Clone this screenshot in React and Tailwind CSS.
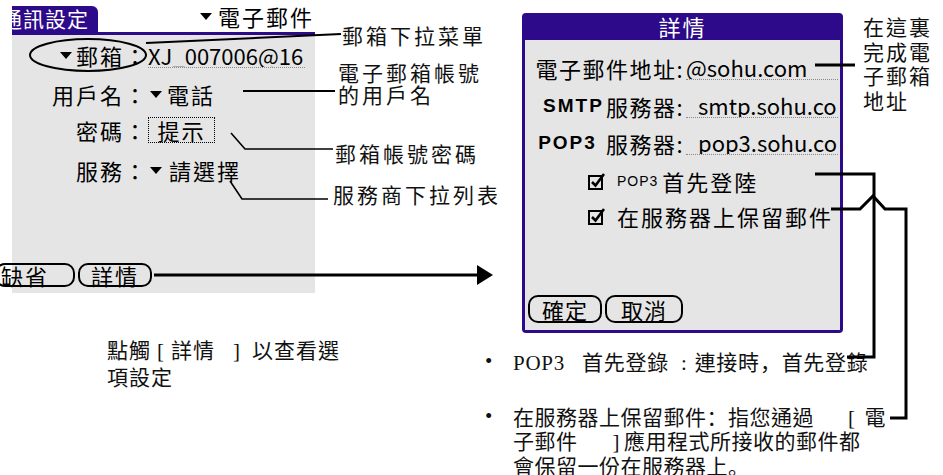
import React from 'react';

// small palm-style dropdown triangle
const Tri = ({ className = '' }) => (
  <svg width="12" height="7" viewBox="0 0 12 7" className={'shrink-0 ' + className}>
    <path d="M0 0H12L6 7Z" fill="#000" />
  </svg>
);

const CheckBox = () => (
  <svg width="19" height="19" viewBox="0 0 19 19" className="shrink-0">
    <rect x="1" y="4" width="13" height="13" fill="none" stroke="#000" strokeWidth="2" />
    <path d="M4 10l3.5 3.5L16 2" fill="none" stroke="#000" strokeWidth="2.6" />
  </svg>
);

const PalmButton = ({ children, className = '' }) => (
  <div className={'flex shrink-0 items-center border-2 border-black rounded-[10px] ' + className}>
    {children}
  </div>
);

const LRow = ({ label, children, className = '' }) => (
  <div className={'flex h-[24px] items-center ' + className}>
    <div className="flex w-[136px] shrink-0 items-center justify-end">{label}</div>
    <div className="flex items-center">{children}</div>
  </div>
);

const DRow = ({ label, children, className = '' }) => (
  <div className={'flex h-[25px] ' + className}>
    <div className="flex w-[161px] shrink-0 items-center justify-end pr-[2px]">{label}</div>
    <div className="flex w-[152px] items-center overflow-hidden whitespace-nowrap border-b border-dotted border-[#8a8a8a]">
      {children}
    </div>
  </div>
);

const Callouts = () => (
  <svg width="943" height="475" className="pointer-events-none absolute left-0 top-0" fill="none" stroke="#000">
    <ellipse cx="88" cy="55" rx="58" ry="16" strokeWidth="2" />
    <polyline points="146,43 341,34" strokeWidth="2" />
    <polyline points="243,91 335,91" strokeWidth="2" />
    <polyline points="231,133 245,149 333,149" strokeWidth="1.6" />
    <polyline points="230,181 242,199 328,199" strokeWidth="1.6" />
    <line x1="154" y1="275" x2="479" y2="275" strokeWidth="3" />
    <polygon points="477,265 493,275 477,285" fill="#000" stroke="none" />
    <line x1="815" y1="65" x2="855" y2="65" strokeWidth="3" />
    <polyline points="815,174 874,174 874,357 847,357" strokeWidth="3" />
    <polyline points="831,209 860,209 873,196 885,209 906,209 906,418 890,418" strokeWidth="3" />
  </svg>
);

export default function App() {
  return (
    <div className="relative h-[475px] w-[943px] overflow-hidden bg-white text-black font-['Noto_Sans_CJK_TC',sans-serif]">
      <div className="flex h-[333px] items-start">
        {/* left palm screen */}
        <div className="w-[315px] shrink-0">
          <div className="flex h-[32px] pl-[12px]">
            <div className="mt-[6px] h-[26px] w-[86px] overflow-hidden rounded-tr-[6px] bg-[#2d0a8a]">
              <div className="-ml-[11px] whitespace-nowrap text-[21px] leading-[24px] tracking-[1px] text-white">通訊設定</div>
            </div>
            <div className="ml-auto flex items-center pr-[1px] text-[22px] leading-[24px] tracking-[2px]">
              <Tri className="mr-[6px]" />
              電子郵件
            </div>
          </div>
          <div className="ml-[12px] h-[3px] bg-[#2d0a8a]" />
          <div className="ml-[12px] h-[258px] bg-[#e5e5e5] pt-[8px] text-[22px] leading-[24px] tracking-[2px]">
            <LRow label={<><Tri className="mr-[4px]" />郵箱：</>}>
              <div className="w-[157px] overflow-hidden whitespace-nowrap border-b border-dotted border-[#8a8a8a] tracking-normal">XJ_007006@16</div>
            </LRow>
            <LRow className="mt-[15px]" label="用戶名：">
              <Tri className="ml-[2px] mr-[5px]" />
              電話
            </LRow>
            <LRow className="mt-[11px] h-[26px]" label="密碼：">
              <div className="flex h-[26px] w-[67px] items-center justify-center border border-dotted border-black">提示</div>
            </LRow>
            <LRow className="mt-[15px]" label="服務：">
              <Tri className="ml-[2px] mr-[7px]" />
              請選擇
            </LRow>
            <div className="-ml-[12px] mt-[81px] flex">
              <PalmButton className="-ml-[5px] h-[24px] w-[80px] pl-[4px]">缺省</PalmButton>
              <PalmButton className="ml-[3px] h-[24px] w-[74px] justify-center">詳情</PalmButton>
            </div>
          </div>
        </div>

        {/* labels for the left screen */}
        <div className="ml-[18px] w-[170px] shrink-0 text-[21px] leading-[22px] tracking-[3px] text-[#111]">
          <div className="ml-[9px] mt-[24px]">郵箱下拉菜單</div>
          <div className="ml-[5px] mt-[15px]">電子郵箱帳號<br />的用戶名</div>
          <div className="ml-[2px] mt-[37px]">郵箱帳號密碼</div>
          <div className="mt-[19px]">服務商下拉列表</div>
        </div>

        {/* details dialog */}
        <div className="ml-[19px] mt-[13px] flex h-[320px] w-[321px] shrink-0 flex-col rounded-[4px] bg-[#2d0a8a] px-[3px] pb-[3px]">
          <div className="flex h-[27px] items-center justify-center text-[22px] tracking-[2px] text-white">詳情</div>
          <div className="flex-1 bg-[#e5e5e5] pt-[15px] text-[22px] leading-[24px]">
            <DRow label={<span className="tracking-[1.5px]">電子郵件地址:</span>}>
              <span>@sohu.com</span>
            </DRow>
            <DRow
              className="mt-[13px]"
              label={<><span className="font-['Liberation_Sans',sans-serif] text-[19px] font-bold tracking-[2px]">SMTP</span><span className="ml-[2px] tracking-[1.5px]">服務器:</span></>}
            >
              <span className="pl-[12px]">smtp.sohu.co</span>
            </DRow>
            <DRow
              className="mt-[12px]"
              label={<><span className="font-['Liberation_Sans',sans-serif] text-[19px] font-bold tracking-[2px]">POP3</span><span className="ml-[9px] tracking-[1.5px]">服務器:</span></>}
            >
              <span className="pl-[12px]">pop3.sohu.co</span>
            </DRow>
            <div className="mt-[14px] flex h-[24px] items-center pl-[63px]">
              <CheckBox />
              <span className="ml-[10px] font-['Liberation_Sans',sans-serif] text-[14px] tracking-[1px]">POP3</span>
              <span className="ml-[4px] tracking-[2px]">首先登陸</span>
            </div>
            <div className="mt-[11px] flex h-[24px] items-center pl-[63px]">
              <CheckBox />
              <span className="ml-[10px] tracking-[2px]">在服務器上保留郵件</span>
            </div>
            <div className="mt-[67px] flex pl-[3px]">
              <PalmButton className="h-[28px] w-[74px] justify-center tracking-[1px]">確定</PalmButton>
              <PalmButton className="ml-[3px] h-[28px] w-[78px] justify-center tracking-[1px]">取消</PalmButton>
            </div>
          </div>
        </div>

        <div className="ml-[20px] mt-[14px] text-[21px] leading-[24.5px] tracking-[2px] text-[#111]">
          <div>在這裏</div>
          <div>完成電</div>
          <div>子郵箱</div>
          <div>地址</div>
        </div>
      </div>

      {/* captions below */}
      <div className="flex items-start font-['Liberation_Serif','Noto_Sans_CJK_TC',serif] text-[21px] text-[#111]">
        <div className="w-[485px] shrink-0 pl-[107px] pt-[5px] leading-[27px] tracking-[1px]">
          <div>點觸<span className="mx-[6px]">[</span>詳情<span className="ml-[18px] mr-[11px]">]</span>以查看選</div>
          <div>項設定</div>
        </div>
        <div className="pt-[16px]">
          <div className="flex leading-[24px] tracking-[0.75px]">
            <span className="w-[28px] shrink-0">•</span>
            <span className="whitespace-nowrap">
              POP3<span className="ml-[17px]">首先登錄</span><span className="ml-[12px] mr-[7px]">:</span>連接時<span className="font-['Noto_Sans_CJK_SC']">，</span>首先登錄
            </span>
          </div>
          <div className="mt-[30px] flex leading-[23.5px] tracking-[0.5px]">
            <span className="w-[28px] shrink-0">•</span>
            <div className="whitespace-nowrap">
              <div>在服務器上保留郵件<span className="font-['Noto_Sans_CJK_SC']">：</span>指您通過<span className="ml-[34px] mr-[9px]">[</span>電</div>
              <div>子郵件<span className="ml-[35px] mr-[4px]">]</span>應用程式所接收的郵件都</div>
              <div>會保留一份在服務器上<span className="font-['Noto_Sans_CJK_SC']">。</span></div>
            </div>
          </div>
        </div>
      </div>

      <Callouts />
    </div>
  );
}
